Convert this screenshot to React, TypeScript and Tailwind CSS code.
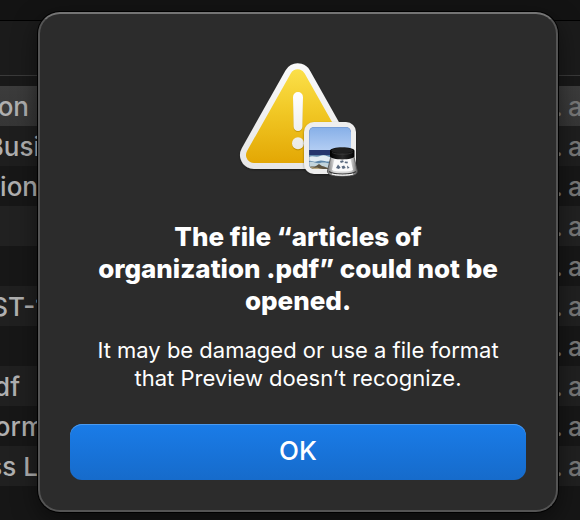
import clsx from 'clsx'

type FileRow = {
  name: string
  nameWidth: string
  shade: string
}

const rows: FileRow[] = [
  { name: 'on', nameWidth: 'w-[29px]', shade: 'bg-linear-to-b from-[#3c3c3c] to-[#363636]' },
  { name: 'Busi', nameWidth: 'w-10', shade: 'bg-[#1e1e1e]' },
  { name: 'tion', nameWidth: 'w-[38px]', shade: 'bg-[#171717]' },
  { name: '', nameWidth: 'w-10', shade: 'bg-[#212121]' },
  { name: '', nameWidth: 'w-10', shade: 'bg-[#171717]' },
  { name: 'ST-1', nameWidth: 'w-[46px]', shade: 'bg-[#202020]' },
  { name: '', nameWidth: 'w-10', shade: 'bg-[#171717]' },
  { name: 'df', nameWidth: 'w-5', shade: 'bg-[#202020]' },
  { name: 'orm', nameWidth: 'w-11', shade: 'bg-[#171717]' },
  { name: 'ss L', nameWidth: 'w-[38px]', shade: 'bg-[#202020]' },
]

function FileList() {
  return (
    <div className="flex min-h-screen flex-col bg-[#161616]">
      <div className="h-5 bg-[#131313]" />
      <div className="h-14 border-t border-b border-t-black border-b-[#3a3a3a] bg-[#1b1b1b]" />
      <div className="h-[10px] bg-[#191919]" />
      <ul>
        {rows.map((row, i) => (
          <li
            key={i}
            className={clsx('flex h-10 justify-between overflow-hidden pt-[3px] text-[26px] leading-9 font-medium', row.shade)}
          >
            <span className={clsx('flex justify-end whitespace-nowrap text-[#b0b0b0]', row.nameWidth)}>{row.name}</span>
            <span className="flex w-[25px] gap-[5px] whitespace-nowrap text-[#777777]">
              <span>.</span>
              <span>a</span>
            </span>
          </li>
        ))}
      </ul>
    </div>
  )
}

function WarningIcon() {
  return (
    <svg viewBox="0 0 136 130" className="h-[130px] w-[136px]" aria-hidden="true">
      <defs>
        <linearGradient id="rim" x1="0" y1="8" x2="0" y2="114" gradientUnits="userSpaceOnUse">
          <stop offset="0" stopColor="#fafafa" />
          <stop offset="1" stopColor="#e6e6e6" />
        </linearGradient>
        <linearGradient id="yellow" x1="0" y1="14" x2="0" y2="108" gradientUnits="userSpaceOnUse">
          <stop offset="0" stopColor="#fbe04a" />
          <stop offset="0.45" stopColor="#f1c825" />
          <stop offset="1" stopColor="#e3a704" />
        </linearGradient>
        <linearGradient id="mark" x1="0" y1="37" x2="0" y2="95" gradientUnits="userSpaceOnUse">
          <stop offset="0" stopColor="#ffffff" />
          <stop offset="1" stopColor="#e9e9e6" />
        </linearGradient>
        <linearGradient id="sky" x1="0" y1="72" x2="0" y2="96" gradientUnits="userSpaceOnUse">
          <stop offset="0" stopColor="#86afe8" />
          <stop offset="1" stopColor="#b4cef3" />
        </linearGradient>
        <linearGradient id="cap" x1="100" y1="0" x2="125" y2="0" gradientUnits="userSpaceOnUse">
          <stop offset="0" stopColor="#000000" />
          <stop offset="0.5" stopColor="#2a2a2a" />
          <stop offset="1" stopColor="#000000" />
        </linearGradient>
        <linearGradient id="glass" x1="97" y1="0" x2="128" y2="0" gradientUnits="userSpaceOnUse">
          <stop offset="0" stopColor="#6b6b6b" />
          <stop offset="0.22" stopColor="#d8d8d8" />
          <stop offset="0.78" stopColor="#cfcfcf" />
          <stop offset="1" stopColor="#5a5a5a" />
        </linearGradient>
        <filter id="drop" x="0" y="0" width="136" height="130" filterUnits="userSpaceOnUse">
          <feDropShadow dx="0" dy="1" stdDeviation="1" floodColor="#000" floodOpacity="0.4" />
        </filter>
        <clipPath id="photo">
          <rect x="79" y="72" width="42" height="42" rx="5" />
        </clipPath>
      </defs>

      <g filter="url(#drop)">
        <path d="M67.7 22.3 24 100h87.4z" fill="url(#rim)" stroke="url(#rim)" strokeWidth="28" strokeLinejoin="round" />
      </g>
      <path d="M67.7 22.3 24 100h87.4z" fill="url(#yellow)" stroke="url(#yellow)" strokeWidth="16" strokeLinejoin="round" />
      <path d="M63 43a5 5 0 0 1 10 0l-.6 29.600a4.400 4.400 0 0 1-8.800 0z" fill="#a87c00" opacity="0.55" />
      <circle cx="68" cy="89.500" r="6" fill="#a87c00" opacity="0.55" />
      <path d="M63 42a5 5 0 0 1 10 0l-.6 29.600a4.400 4.400 0 0 1-8.800 0z" fill="url(#mark)" />
      <circle cx="68" cy="88.300" r="6" fill="url(#mark)" />

      {/* Preview badge */}
      <g filter="url(#drop)">
        <rect x="74" y="67" width="52" height="52" rx="10" fill="#eeeeee" />
      </g>
      <g clipPath="url(#photo)">
        <rect x="79" y="72" width="42" height="24" fill="url(#sky)" />
        <rect x="79" y="95" width="42" height="8" fill="#24366d" />
        <rect x="79" y="100" width="42" height="14" fill="#5f88aa" />
        <path d="M79 102c4-2 7 1 11-1s7 0 12 2v3c-6 2-9-2-14 0s-6-1-9 0z" fill="#e2edf3" />
        <path d="M79 107c5-1 7 2 11 1s7 0 12 1v5H79z" fill="#c3d5dc" />
        <path d="M79 114v-2c3-1 5 0 7-1l3-2 3 2c3 1 5 1 7 3z" fill="#5d5340" />
        <path d="M80 112.500c3-1 4 1 7 0l3 1 6 1H80z" fill="#b9a77c" />
        <path d="M79 114V77a5 5 0 0 1 5-5h32a5 5 0 0 1 5 5" fill="none" stroke="#4c6ea8" strokeWidth="1" opacity="0.5" />
      </g>

      {/* Loupe */}
      <path
        d="M101 101l-3.600 15c0 3.500 4 5.200 15 5.200s15-1.700 15-5.200l-3.600-15z"
        fill="url(#glass)"
        stroke="#4c4c4c"
        strokeWidth="0.8"
      />
      <path d="M104.500 104h16l2.500 11c-4 2-17 2-21 0z" fill="#fafafa" />
      <path
        d="M110 106l3-.8.8 1.800-3 1zM115 106.500l3 .3-.6 1.700-2.800-.5zM106 113l2-3.500 2.600 3-1.800 1.500zM111.500 111.500l2.600-1 1.600 2.600-3 .9zM117 110.500l2.600 2.200-2.200 1z"
        fill="#5b6b80"
      />
      <path d="M99 116.500c4 3.500 23 3.500 27 0" fill="none" stroke="#3c3c3c" strokeWidth="1.200" />
      <path d="M102 119c5 1.500 16 1.500 21 0" fill="none" stroke="#ffffff" strokeWidth="1" />
      <path d="M100 96c0-5 24.500-5 24.500 0v5c0 4.500-24.500 4.500-24.500 0z" fill="url(#cap)" />
      <ellipse cx="112.200" cy="95.500" rx="11" ry="2.400" fill="#202020" />
      <path d="M102 97.500c4 2.500 16.500 2.500 20.500 0" fill="none" stroke="#3c3c3c" strokeWidth="0.7" />
    </svg>
  )
}

export default function App() {
  return (
    <main className="relative min-h-screen overflow-hidden bg-[#161616] font-['Inter',sans-serif]">
      <FileList />

      <div className="absolute inset-0 flex items-start pt-3 pr-[22px] pl-[38px]">
        <div
          role="alertdialog"
          aria-labelledby="alert-title"
          aria-describedby="alert-message"
          className="flex w-full flex-col items-center rounded-[22px] border-2 border-[#545454] border-t-[#747474] bg-[#2c2c2c] px-[30px] pt-[41px] pb-[30px] text-center text-white shadow-[0_0_0_1px_#000,0_8px_24px_rgba(0,0,0,0.5)]"
        >
          <WarningIcon />
          <h1 id="alert-title" className="mt-9 max-w-[410px] text-[26px] leading-8 font-extrabold">
            The file “articles of organization .pdf” could not be opened.
          </h1>
          <p id="alert-message" className="mt-[19px] max-w-[416px] text-[22px] leading-7">
            It may be damaged or use a file format that Preview doesn’t recognize.
          </p>
          <button
            type="button"
            className="mt-8 h-14 w-full rounded-xl bg-linear-to-b from-[#1a7ce8] to-[#166bcb] pb-[2px] text-[26px] leading-8 font-medium shadow-[inset_0_1px_0_#4a9af0]"
          >
            OK
          </button>
        </div>
      </div>
    </main>
  )
}
